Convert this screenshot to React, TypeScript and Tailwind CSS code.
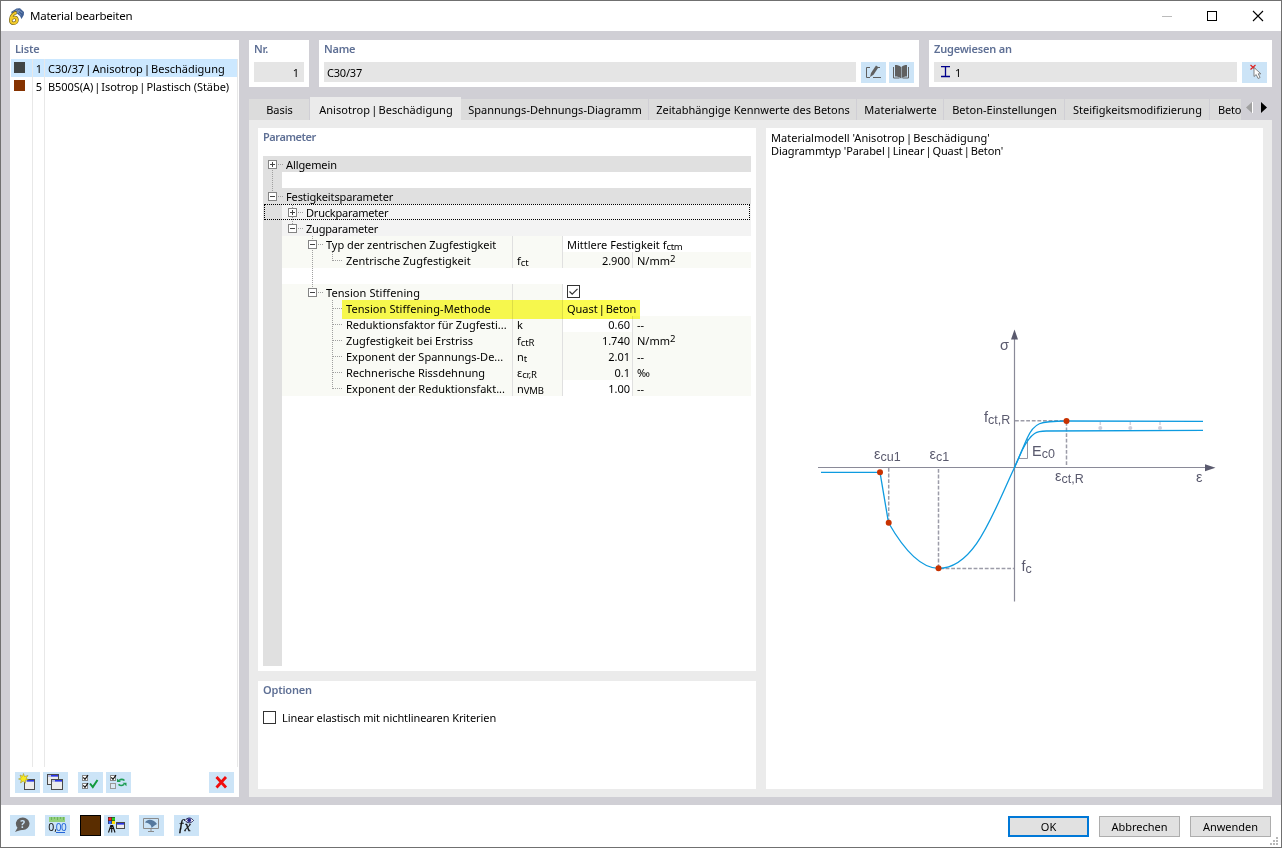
import React from "react";

interface IconButtonProps {
  children: React.ReactNode;
  title: string;
}

const IconButton: React.FC<IconButtonProps> = ({ children, title }) => (
  <button
    aria-label={title}
    className="h-[21px] w-[25px] flex-shrink-0 bg-[#cce4f7]"
  >
    <svg width="25" height="21" viewBox="0 0 25 21" fill="none">
      {children}
    </svg>
  </button>
);

/* Text with tighter room around its "|" separators */
const Piped = ({ text }: { text: string }) => (
  <>
    {text.split("|").map((part, i) => (
      <React.Fragment key={i}>
        {i > 0 && <span className="-mx-[1.75px]">|</span>}
        {part}
      </React.Fragment>
    ))}
  </>
);

/* ---------- Icons ---------- */

const MiniWindow = ({ x, y, w = 11, h = 11 }: { x: number; y: number; w?: number; h?: number }) => (
  <g>
    <rect x={x + 0.5} y={y + 0.5} width={w - 1} height={h - 1} fill="#ececec" stroke="#4a4a4a" />
    <rect x={x + 1} y={y + 1} width={w - 2} height="2" fill="#b9bfe0" />
    <rect x={x + w - 8} y={y + 1} width="7" height="1.5" fill="#2a35e8" />
  </g>
);

const MiniCheck = ({ x, y, checked = true }: { x: number; y: number; checked?: boolean }) => (
  <g>
    <rect x={x + 0.5} y={y + 0.5} width="5" height="5" fill={checked ? "#fff" : "#dbe9f5"} stroke={checked ? "#888" : "#999"} />
    {checked && <path d={`M${x + 1.3} ${y + 2.4}l1.7 2 3-4.2`} stroke="#111" strokeWidth="1.2" />}
  </g>
);

const AppLogo = () => (
  <svg width="17" height="17" viewBox="0 0 17 17" className="flex-shrink-0">
    <path d="M3 4L8.500 .500l3.500-.2 4 3.800-.2 3-2.300 4-1.500-3L9 5.600 5 7z" fill="#3f5f94" />
    <path d="M4.500 4.500l5-2.600 5 3M8 1.500l5 6M12 1.500L9 5" stroke="#9bb2d4" strokeWidth=".6" fill="none" />
    <path
      d="M8.500 4.500C5.500 5 2.900 8 2.700 11.500c-.1 2.700 1 3.800 2.800 3.800 2 0 3.500-1.400 3.500-3.300 0-1.700-1-2.600-2.500-2.600-1.400 0-2.600.9-3.200 2.100"
      fill="none"
      stroke="#6b5b18"
      strokeWidth="3.400"
    />
    <path
      d="M8.500 4.500C5.500 5 2.900 8 2.700 11.500c-.1 2.700 1 3.800 2.800 3.800 2 0 3.500-1.400 3.500-3.300 0-1.700-1-2.600-2.500-2.600-1.400 0-2.600.9-3.200 2.100"
      fill="none"
      stroke="#f2cb2c"
      strokeWidth="2.200"
    />
  </svg>
);

/* ---------- Parameter tree ---------- */

interface TreeRow {
  level?: number;
  label?: string;
  labelClass?: string;
  box?: "+" | "-";
  symbol?: [string, string];
  value?: React.ReactNode;
  unit?: React.ReactNode;
  wide?: boolean;
  checkbox?: boolean;
  editable?: boolean;
}

const perMm2 = (
  <>
    N/mm<span className="relative -top-[3px] text-[9.5px]">2</span>
  </>
);

const rows: TreeRow[] = [
  { level: 1, label: "Allgemein", labelClass: "tracking-[-0.1px]", box: "+" },
  {},
  { level: 1, label: "Festigkeitsparameter", labelClass: "tracking-[-0.12px]", box: "-" },
  { level: 2, label: "Druckparameter", labelClass: "tracking-[-0.2px]", box: "+" },
  { level: 2, label: "Zugparameter", labelClass: "tracking-[-0.2px]", box: "-" },
  {
    level: 3,
    label: "Typ der zentrischen Zugfestigkeit",
    labelClass: "tracking-[-0.05px]",
    box: "-",
    wide: true,
    value: (
      <>
        Mittlere Festigkeit f<span className="relative top-px text-[9.5px] tracking-[-0.3px]">ctm</span>
      </>
    ),
  },
  { level: 4, label: "Zentrische Zugfestigkeit", symbol: ["f", "ct"], value: "2.900", unit: perMm2 },
  {},
  { level: 3, label: "Tension Stiffening", labelClass: "tracking-[0.08px]", box: "-", wide: true, checkbox: true },
  {
    level: 4,
    label: "Tension Stiffening-Methode",
    labelClass: "tracking-[0.08px]",
    wide: true,
    value: (
      <span className="tracking-[-0.05px]">
        <Piped text="Quast | Beton" />
      </span>
    ),
  },
  { level: 4, label: "Reduktionsfaktor für Zugfesti...", symbol: ["k", ""], value: "0.60", unit: "--", editable: true },
  { level: 4, label: "Zugfestigkeit bei Erstriss", symbol: ["f", "ctR"], value: "1.740", unit: perMm2 },
  { level: 4, label: "Exponent der Spannungs-De...", symbol: ["n", "t"], value: "2.01", unit: "--" },
  { level: 4, label: "Rechnerische Rissdehnung", symbol: ["ε", "cr,R"], value: "0.1", unit: "‰" },
  { level: 4, label: "Exponent der Reduktionsfakt...", symbol: ["n", "VMB"], value: "1.00", unit: "--", editable: true },
];

function CheckBox({ checked = false }: { checked?: boolean }) {
  return (
    <svg width="13" height="13" viewBox="0 0 13 13" fill="none" className="block flex-shrink-0">
      <rect x=".5" y=".5" width="12" height="12" fill="#fff" stroke="#333" />
      {checked && <path d="M2.500 6.500l2.700 2.700 5.300-5.400" stroke="#333" strokeWidth="1.200" />}
    </svg>
  );
}

const Expander = ({ type }: { type: "+" | "-" }) => (
  <svg width="9" height="9" viewBox="0 0 9 9" className="relative z-10 block flex-shrink-0">
    <rect x=".5" y=".5" width="8" height="8" fill="#fff" stroke="#848484" />
    <path d={type === "+" ? "M2 4.500h5M4.500 2v5" : "M2 4.500h5"} stroke="#444" />
  </svg>
);

const labelPad = ["", "pl-1", "pl-[6px]", "pl-[26px]", "pl-[64px]"];

const ParameterRow = ({ row }: { row: TreeRow }) => {
  const level = row.level ?? 0;
  if (level === 0) {
    return (
      <div className="flex h-4">
        <div className="w-[19px] bg-[#e0e0e0]" />
      </div>
    );
  }

  const name = (
    <>
      {level > 1 && row.box && (
        <span className="mr-[9px]">
          <Expander type={row.box} />
        </span>
      )}
      <span className={`pt-0.5 whitespace-nowrap ${row.labelClass ?? ""}`}>{row.label}</span>
    </>
  );

  return (
    <div className="flex h-4 leading-4">
      <div className="flex w-[19px] items-center bg-[#e0e0e0] pl-[5px]">
        {level === 1 && row.box && <Expander type={row.box} />}
      </div>
      {level < 3 ? (
        <div className={`flex flex-1 items-center ${labelPad[level]} ${level === 1 ? "bg-[#e0e0e0]" : "bg-[#f3f3f3]"}`}>
          {name}
        </div>
      ) : (
        <>
          <div className={`flex w-[231px] items-center border-r border-[#e0e0e0] bg-[#f9faf5] ${labelPad[level]}`}>
            {name}
          </div>
          <div className="w-[50px] border-r border-[#e0e0e0] bg-[#f9faf5] pl-1 leading-[18px]">
            {row.symbol && (
              <>
                {row.symbol[0]}
                <span className="relative top-px text-[9.5px] tracking-[-0.2px]">{row.symbol[1]}</span>
              </>
            )}
          </div>
          {row.wide ? (
            <div className="flex-1 bg-white pl-1 leading-[18px] whitespace-nowrap">
              {row.checkbox ? (
                <div className="pt-px">
                  <CheckBox checked />
                </div>
              ) : (
                row.value
              )}
            </div>
          ) : (
            <>
              <div
                className={`w-[70px] border-r border-[#e0e0e0] pr-0.5 text-right leading-[18px] ${
                  row.editable ? "bg-white" : "bg-[#f9faf5]"
                }`}
              >
                {row.value}
              </div>
              <div className="flex-1 bg-[#f9faf5] pl-1 leading-[18px]">{row.unit}</div>
            </>
          )}
        </>
      )}
    </div>
  );
};

const TreeLines = () => (
  <svg
    width="100"
    height="240"
    viewBox="0 0 100 240"
    className="absolute left-0 top-0"
    stroke="#a0a0a0"
    strokeDasharray="1 1"
    fill="none"
  >
    <path d="M9.500 14v22M15 8.500h5M15 40.500h5M29.500 49v3M29.500 61v7M35 56.500h5M35 72.500h5" />
    <path d="M49.500 80v4M49.500 94v38M55 88.500h5M55 136.500h5M69.500 96v9M70 104.500h10" />
    <path d="M69.500 144v89M70 152.500h10M70 168.500h10M70 184.500h10M70 200.500h10M70 216.500h10M70 232.500h10" />
  </svg>
);

/* ---------- Stress-strain diagram ---------- */

const Label = ({ x, y, main, sub = "" }: { x: number; y: number; main: string; sub?: string }) => (
  <text x={x} y={y} fontSize="14.500" fill="#5a5a6e">
    {main}
    <tspan dy="2.300" fontSize="12.500">
      {sub}
    </tspan>
  </text>
);

const Diagram = () => (
  <svg
    width="430"
    height="290"
    viewBox="800 320 430 290"
    fill="none"
    className="font-['Liberation_Sans',Arial,sans-serif]"
  >
    <g stroke="#8a8a98" strokeWidth="1.200">
      <path d="M818 467.500h388M1014.500 338v263.500" />
      <path d="M1018.500 458.500h9v-20" strokeWidth=".9" />
    </g>
    <path d="M1014.500 329.500l-3.500 10h7zM1215.500 467.700l-10.500-3.500v7z" fill="#5a5a6e" />
    <g stroke="#9c9ca8" strokeWidth="1.500" strokeDasharray="3.800 1.800">
      <path d="M888.700 468v54M938.500 469v99M940 568.500h74M1015 420.800h51M1066.500 422v44" />
    </g>
    <g stroke="#0e9be0" strokeWidth="1.300">
      <path d="M821 472.300h59l8.500 50.400C903 548 920 568.300 938.500 568.300C975 568.300 993 513 1014.500 467.500L1027 438.500C1034 422.500 1040 421 1066.500 421l136.500.3" />
      <path d="M1014.500 467.500L1022 450.500C1032 430.500 1038 431 1047 431L1203 430.300" />
    </g>
    <g stroke="#cfcfdb" strokeWidth="1.500">
      <path d="M1100.300 422v3M1130.300 422v3M1160 422v3" />
    </g>
    <g fill="#cfcfdb">
      <circle cx="1100.300" cy="428" r="2" />
      <circle cx="1130.300" cy="428" r="2" />
      <circle cx="1160" cy="428" r="2" />
    </g>
    <g fill="#c83200">
      <circle cx="880" cy="472.300" r="3" />
      <circle cx="888.700" cy="522.700" r="3" />
      <circle cx="938.500" cy="568.300" r="3" />
      <circle cx="1066.500" cy="421" r="3" />
    </g>
    <Label x={1000} y={349.500} main="σ" />
    <Label x={1196} y={482} main="ε" />
    <Label x={874} y={458.500} main="ε" sub="cu1" />
    <Label x={929.500} y={458.500} main="ε" sub="c1" />
    <Label x={984} y={422} main="f" sub="ct,R" />
    <Label x={1032} y={455.500} main="E" sub="c0" />
    <Label x={1055} y={481} main="ε" sub="ct,R" />
    <Label x={1021.500} y={570.500} main="f" sub="c" />
  </svg>
);

/* ---------- Page ---------- */

const materials = [
  { no: 1, name: "C30/37 | Anisotrop | Beschädigung", swatch: "bg-[#404545]", selected: true },
  { no: 5, name: "B500S(A) | Isotrop | Plastisch (Stäbe)", swatch: "bg-[#853200]", selected: false },
];

const tabs = [
  { label: "Basis", width: "w-[61px]" },
  { label: "Anisotrop | Beschädigung", width: "w-[151px]", active: true },
  { label: "Spannungs-Dehnungs-Diagramm", width: "w-[188px]" },
  { label: "Zeitabhängige Kennwerte des Betons", width: "w-[208px]" },
  { label: "Materialwerte", width: "w-[87px]" },
  { label: "Beton-Einstellungen", width: "w-[121px]" },
  { label: "Steifigkeitsmodifizierung", width: "w-[145px]" },
];

const Heading = ({ children }: { children: React.ReactNode }) => (
  <h2 className="h-[18px] pl-[5px] leading-[18px] font-semibold tracking-[-0.2px] text-[#5f7095]">{children}</h2>
);

const MaterialList = () => (
  <aside className="flex w-[229px] flex-col bg-white">
    <Heading>Liste</Heading>
    <div className="mt-px ml-px flex w-[227px] flex-1 flex-col border-r border-[#e8e8e8]">
      {materials.map((m) => (
        <div key={m.no} className={`flex h-[18px] leading-[20px] ${m.selected ? "bg-[#cce8ff]" : ""}`}>
          <div className="w-[22px] flex-shrink-0 border-r border-[#e8e8e8] pt-[3px] pl-[3px]">
            <div className={`h-[11px] w-[11px] ${m.swatch}`} />
          </div>
          <div className="w-3 flex-shrink-0 border-r border-[#e8e8e8] pr-[2px] text-right">{m.no}</div>
          <div className={`pl-[3px] whitespace-nowrap ${m.selected ? "" : "tracking-[-0.06px]"}`}>
            <Piped text={m.name} />
          </div>
        </div>
      ))}
      <div className="flex flex-1">
        <div className="w-[22px] border-r border-[#e8e8e8]" />
        <div className="w-3 border-r border-[#e8e8e8]" />
      </div>
    </div>
    <div className="flex h-[30px] items-start pt-[5px] pr-[5px] pl-[5px]">
      <IconButton title="Neu">
        <MiniWindow x={9} y={7} />
        <path d="M8.500 1.500l1 3 3.500-1-2 2.700 2.500 1.600-3.200.3.300 3.200-2.300-2.300L5.500 11l.8-3L3.500 7l2.700-1L5 3l2.600 1.200z" fill="#f9ea20" stroke="#9b8c1c" strokeWidth=".5" />
      </IconButton>
      <div className="w-[3px]" />
      <IconButton title="Kopieren">
        <MiniWindow x={4} y={2} w={12} />
        <MiniWindow x={8} y={7} w={12} />
      </IconButton>
      <div className="w-[10px]" />
      <IconButton title="Alle auswählen">
        <MiniCheck x={4} y={3} />
        <MiniCheck x={4} y={11} />
        <path d="M12 11.500l2.800 3.500L19.500 8" stroke="#129a3c" strokeWidth="2" />
      </IconButton>
      <div className="w-[3px]" />
      <IconButton title="Auswahl umkehren">
        <MiniCheck x={4} y={3} />
        <MiniCheck x={4} y={11} checked={false} />
        <path d="M18.500 8.500c-1.500-1.300-4-1.300-5.500 0M12.500 12.300c1.500 1.300 4 1.300 5.500 0" stroke="#1f9d55" strokeWidth="1.600" />
        <path d="M11 6.500v3.500h4zM20.500 14.300v-3.500h-4z" fill="#1f9d55" />
      </IconButton>
      <div className="flex-1" />
      <IconButton title="Löschen">
        <path d="M7.500 5l9.500 10.500M17 5L7.500 15.500" stroke="#f10d0d" strokeWidth="2.800" />
      </IconButton>
    </div>
  </aside>
);

const DialogButton = ({ children, primary }: { children: React.ReactNode; primary?: boolean }) => (
  <button
    className={`h-[21px] w-[81px] bg-[#e1e1e1] text-center ${
      primary ? "border-2 border-[#0078d7] leading-[18px]" : "border border-[#adadad] leading-[20px]"
    }`}
  >
    {children}
  </button>
);

export default function App() {
  return (
    <div className="flex h-[848px] w-[1282px] flex-col overflow-hidden border border-[#707070] bg-white font-['Noto_Sans','Open_Sans',sans-serif] text-[11px] text-black">
      {/* Title bar */}
      <header className="flex h-[30px] flex-shrink-0 items-center pl-[7px]">
        <AppLogo />
        <h1 className="ml-[5px] text-[11.5px] tracking-[-0.23px]">Material bearbeiten</h1>
        <svg width="110" height="14" viewBox="0 0 110 14" fill="none" className="mr-3 ml-auto">
          <path d="M3 7.500h10" stroke="#bbb" />
          <rect x="48.500" y="2.500" width="9" height="9" stroke="#000" />
          <path d="M94 2l10 10M104 2L94 12" stroke="#000" strokeWidth="1.100" />
        </svg>
      </header>

      <main className="flex h-[774px] flex-shrink-0 bg-[#d0cfd5] pt-[9px] pr-[9px] pb-2 pl-[9px]">
        <MaterialList />

        <div className="ml-[10px] flex w-[1023px] flex-col">
          <div className="flex h-[47px] gap-[10px]">
            <section className="w-[60px] bg-white">
              <Heading>Nr.</Heading>
              <div className="mx-[5px] mt-1 h-5 bg-[#e5e5e5] pr-[5px] text-right leading-[22px]">1</div>
            </section>
            <section className="w-[600px] bg-white">
              <Heading>Name</Heading>
              <div className="mx-[5px] mt-1 flex">
                <div className="h-5 w-[532px] bg-[#e5e5e5] pl-[3px] leading-[22px] tracking-[-0.2px]">C30/37</div>
                <div className="ml-[5px] flex gap-[3px]">
                  <IconButton title="Bearbeiten">
                    <path d="M9 5.500H5.500v10H9M12 15.500h8M17 5.500h2" stroke="#606060" />
                    <path d="M9 15l1-4 5-7.500 2.500 1.800-5 7.500z" fill="#606060" />
                  </IconButton>
                  <IconButton title="Bibliothek">
                    <path d="M6 3c2.500 0 4.500.500 6 2v11.500c-1.500-1.500-3.500-2-6-2zM18 3c-2.500 0-4 .500-5.500 2v11.500c1.500-1.500 3-2 5.500-2z" fill="#606060" />
                    <path d="M4.500 5v11h6M19.500 5v11h-6" stroke="#606060" />
                  </IconButton>
                </div>
              </div>
            </section>
            <section className="w-[343px] bg-white">
              <Heading>Zugewiesen an</Heading>
              <div className="mx-[5px] mt-1 flex">
                <div className="flex h-5 w-[303px] bg-[#e5e5e5] pl-[7px] leading-[22px]">
                  <svg width="9" height="12" viewBox="0 0 9 12" fill="none" className="mt-1">
                    <path d="M0 .5h9M0 10.500h9M4.500 1v9.500" stroke="#00008b" strokeWidth="1.300" />
                  </svg>
                  <span className="ml-[5px]">1</span>
                </div>
                <div className="ml-[5px]">
                  <IconButton title="Auswählen">
                    <path d="M8.500 3l5 4.500M13.500 3l-5 4.500" stroke="#e02020" strokeWidth="1.200" />
                    <path d="M12 5.500v9l2.200-1.900 1.900 3.900 2-1-1.900-3.700h2.700z" fill="#fff" stroke="#777" strokeWidth=".9" />
                  </IconButton>
                </div>
              </div>
            </section>
          </div>

          {/* Tabs */}
          <nav className="mt-[10px] flex h-[23px] items-end">
            {tabs.map((tab) => (
              <button
                key={tab.label}
                className={`flex-shrink-0 pl-px text-center whitespace-nowrap ${tab.width} ${
                  tab.active
                    ? "h-[23px] bg-[#ebebeb] pt-1 tracking-[0.06px]"
                    : "h-[21px] border-r border-[#d0cfd5] bg-[#dcdcdc] pt-0.5"
                }`}
              >
                <Piped text={tab.label} />
              </button>
            ))}
            <button className="h-[21px] w-[31px] bg-[#dcdcdc] pt-0.5 pl-2 text-left tracking-[-0.2px] whitespace-nowrap">
              Beto
            </button>
            <svg width="31" height="21" viewBox="0 0 31 21">
              <path d="M11 3v11l-6-5.500z" fill="#a0a0a0" />
              <path d="M11.500 3v11" stroke="#fff" />
              <path d="M20 3v11l6-5.500z" fill="#000" />
            </svg>
          </nav>

          <div className="flex flex-1 gap-[10px] bg-[#ebebeb] pt-2 pr-[9px] pb-2 pl-[9px]">
            <div className="flex w-[498px] flex-col gap-[10px]">
              <section className="h-[543px] bg-white">
                <Heading>
                  <span className="tracking-[-0.45px]">Parameter</span>
                </Heading>
                <div className="relative mt-[10px] ml-[5px] flex h-[510px] w-[488px] flex-col">
                  {rows.map((row, i) => (
                    <ParameterRow key={i} row={row} />
                  ))}
                  <div className="w-[19px] flex-1 bg-[#e0e0e0]" />
                  <TreeLines />
                  {/* focus frame and marked row */}
                  <div className="absolute top-12 left-px h-4 w-[486px] border border-dotted border-black" />
                  <div className="absolute top-36 left-[79px] h-[19px] w-[298px] bg-[#fcfc50] mix-blend-multiply" />
                </div>
              </section>
              <section className="h-[108px] bg-white">
                <Heading>Optionen</Heading>
                <label className="mt-[12px] ml-[5px] flex h-[13px] items-center">
                  <CheckBox />
                  <span className="ml-[6px] pt-0.5 tracking-[-0.09px]">Linear elastisch mit nichtlinearen Kriterien</span>
                </label>
              </section>
            </div>

            <section className="w-[497px] bg-white">
              <div className="h-[192px] pt-[3px] pl-[5px] leading-[13px]">
                <p className="tracking-[0.03px]">
                  <Piped text="Materialmodell 'Anisotrop | Beschädigung'" />
                </p>
                <p className="tracking-[-0.1px]">
                  <Piped text="Diagrammtyp 'Parabel | Linear | Quast | Beton'" />
                </p>
              </div>
              <div className="pl-[34px]">
                <Diagram />
              </div>
            </section>
          </div>
        </div>
      </main>

      {/* Footer */}
      <footer className="flex flex-1 items-start pt-[10px] pl-[9px]">
        <IconButton title="Hilfe">
          <path d="M5 17l2.500-4.200A6.800 6.300 0 1 1 12 15C9.500 15 8 16 5 17z" fill="#606060" />
          <text x="10.300" y="12.500" fontSize="10" fontWeight="700" fill="#cce4f7">
            ?
          </text>
        </IconButton>
        <div className="w-[10px]" />
        <IconButton title="Einheiten">
          <rect x="4" y="2" width="16" height="5" fill="#93d07c" />
          <path d="M6.500 2v3M9.500 2v2M12.500 2v3M15.500 2v2M18.500 2v3" stroke="#6fb35c" />
          <text x="3.300" y="16" fontSize="10.500" fill="#111">
            0,
          </text>
          <text x="10.800" y="16" fontSize="10" letterSpacing="-.6" fill="#2465d8">
            00
          </text>
          <path d="M11 17.500h9" stroke="#2465d8" />
        </IconButton>
        <div className="ml-[10px] h-[21px] w-[21px] border border-black bg-[#5a2d00]" />
        <div className="w-[3px]" />
        <IconButton title="Darstellung">
          <rect x="4" y="2" width="7" height="7" fill="#222" />
          <path d="M4.500 2.500h3v3h-3z" fill="#f22" />
          <path d="M8 2.500h3v3H8z" fill="#2c2" />
          <path d="M4.500 6h3v3h-3z" fill="#36f" />
          <path d="M8 6h3v3H8z" fill="#fd0" />
          <path d="M7 10L4.500 17.500M8.500 10l2.500 7.500M7.700 10v7.500M6 13.500h4" stroke="#111" strokeWidth="1.100" />
          <MiniWindow x={12} y={7} w={9} h={7} />
        </IconButton>
        <div className="w-[10px]" />
        <IconButton title="Ansicht">
          <path d="M4.500 3.500h15v10h-15zM12 13.500v3M9 16.500h6" stroke="#8a8a8a" />
          <path d="M6 7.500C8 4 14 3.500 18 9L15.500 10.500 12.500 13C12.500 9.500 9.500 8 6 7.500z" fill="#55789e" />
        </IconButton>
        <div className="w-[10px]" />
        <IconButton title="Formel">
          <text x="5" y="15" fontSize="15" fontStyle="italic" fill="#111" stroke="#111" strokeWidth=".3" className="font-['Liberation_Serif',serif]">
            f
          </text>
          <text x="10.500" y="16" fontSize="14" fontStyle="italic" fill="#111" stroke="#111" strokeWidth=".3" className="font-['Liberation_Serif',serif]">
            x
          </text>
          <path d="M11 5.500c2.500-3.300 6-3.300 8.500 0-2.500 3-6 3-8.500 0z" fill="#fff" stroke="#1b1b55" />
          <circle cx="15.200" cy="5.200" r="1.900" fill="#26268c" />
        </IconButton>

        <div className="mt-px mr-[10px] ml-auto flex gap-[10px]">
          <DialogButton primary>OK</DialogButton>
          <DialogButton>Abbrechen</DialogButton>
          <DialogButton>Anwenden</DialogButton>
        </div>
      </footer>
      <svg width="8" height="8" viewBox="0 0 8 8" className="absolute top-[837px] left-[1270px]" fill="#b8b8b8">
        <path d="M6 0h2v2H6zM3 3h2v2H3zM6 3h2v2H6zM0 6h2v2H0zM3 6h2v2H3zM6 6h2v2H6z" />
      </svg>
    </div>
  );
}
